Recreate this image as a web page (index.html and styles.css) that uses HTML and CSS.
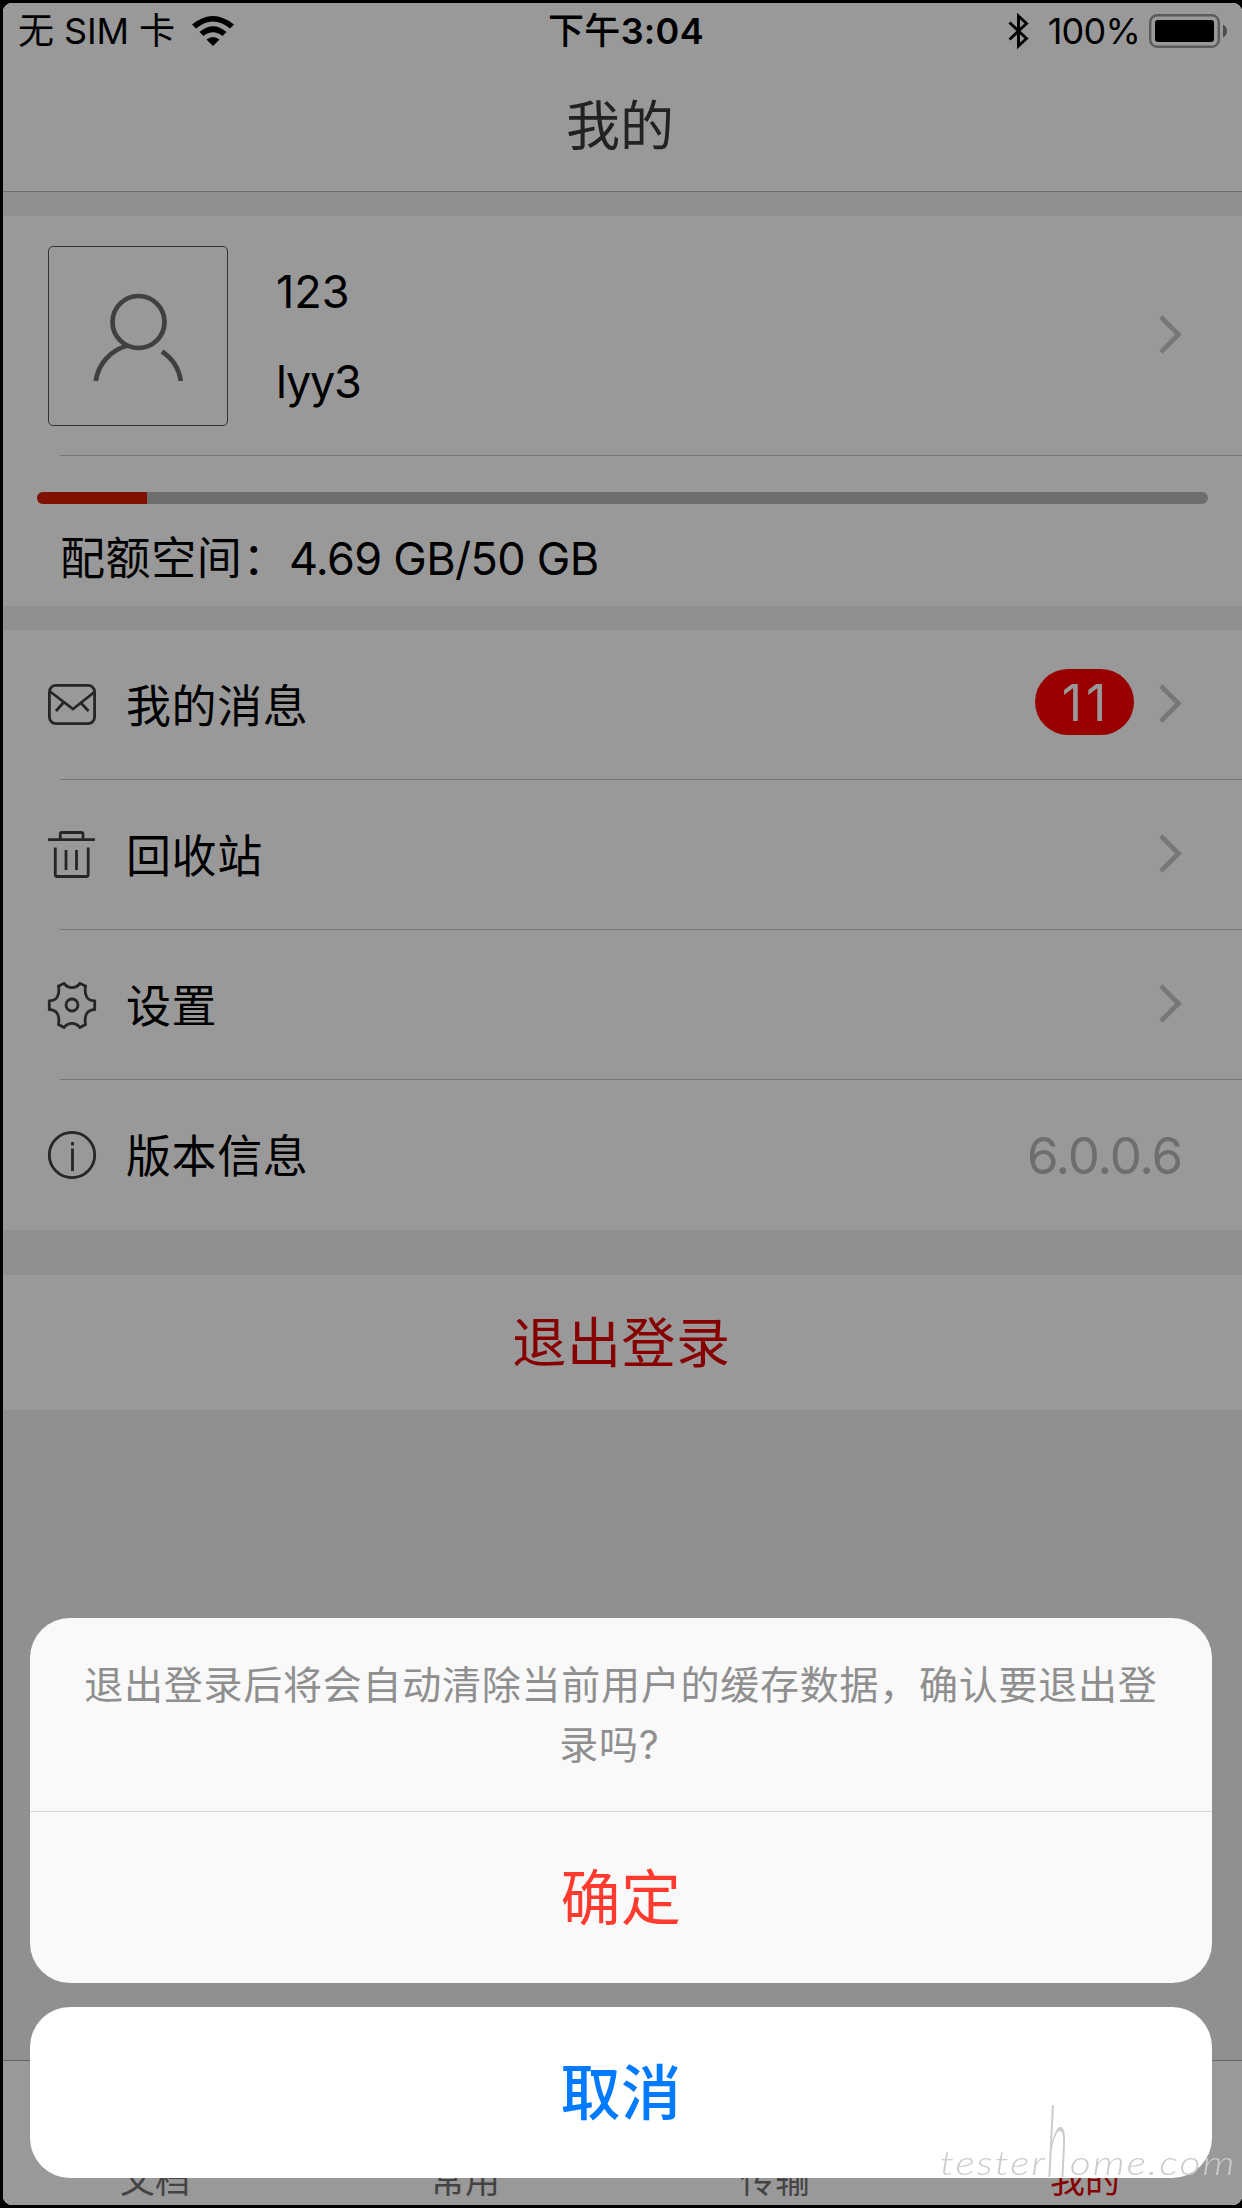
FILE: index.html
```html
<!DOCTYPE html>
<html lang="zh-CN">
<head>
<meta charset="utf-8">
<title>我的</title>
<link rel="stylesheet" href="styles.css">
</head>
<body>
<div class="phone">
  <header class="top">
    <div class="status">
      <div class="status-left">
        <span class="carrier">无 SIM 卡</span>
        <svg class="wifi" width="42" height="31" viewBox="0 0 42 31"><path d="M0 8.600Q21-8.600 42 8.600L38 12.600Q21-1.500 4 12.600ZM7.500 16Q21 4.500 34.500 16L30.500 20Q21 12.500 11.500 20ZM14.500 23.500Q21 18.500 27.500 23.500L21 30Z"/></svg>
      </div>
      <span class="time"><span class="period">下午</span>3:04</span>
      <div class="status-right">
        <svg class="bluetooth" width="21" height="38" viewBox="0 0 21 38"><path d="M1.500 10.500L18.500 26.500 10.500 34V4L18.500 11.500 1.500 27.500" fill="none" stroke="#000" stroke-width="2.900"/></svg>
        <span class="percent">100%</span>
        <svg class="battery" width="78" height="34" viewBox="0 0 78 34"><rect x="1.200" y="1.200" width="68.600" height="31.600" rx="7" fill="none" stroke="#989898" stroke-width="2.400"/><rect x="6" y="6" width="59" height="22" rx="3"/><path d="M74 10.500Q78 12.500 78 17T74 23.500Z" fill="#808080"/></svg>
      </div>
    </div>
    <h1 class="title">我的</h1>
  </header>

  <section class="group profile-group">
    <div class="profile">
      <div class="avatar">
        <svg width="178" height="178" viewBox="49 247 178 178" fill="none" stroke="#6b6b6b" stroke-width="4.700"><circle cx="138.500" cy="322" r="26"/><path d="M95.700 381A43 43 0 0 1 128 345.500M162 351.500A43 43 0 0 1 180.800 381"/></svg>
      </div>
      <div class="names"><span>123</span><span class="account">lyy3</span></div>
      <svg class="chevron" width="23" height="39" viewBox="0 0 23 39"><path d="M1.800 1.800L19.500 19.500 1.800 37.200"/></svg>
    </div>
    <div class="quota">
      <div class="bar"><div class="used" style="width:110px"></div></div>
      <div class="quota-text"><span>配额空间：</span><span class="amount">4.69 GB/50 GB</span></div>
    </div>
  </section>

  <section class="group menu">
    <div class="row">
      <svg class="icon" width="50" height="50" viewBox="47 680 50 50"><rect x="49.400" y="685.400" width="45.200" height="38.200" rx="6.500"/><path d="M50 691.500L73 709 94.500 692M63.500 702.500L56 711M80.500 702.500L88.500 711"/></svg>
      <span class="label">我的消息</span>
      <span class="badge">11</span>
      <svg class="chevron" width="23" height="39" viewBox="0 0 23 39"><path d="M1.800 1.800L19.500 19.500 1.800 37.200"/></svg>
    </div>
    <div class="row">
      <svg class="icon" width="50" height="50" viewBox="47 830 50 50"><path d="M48 839.700H95M60.300 839V834Q60.300 832.500 62 832.500H81.500Q83 832.500 83 834V839M55.300 847.500V874.500Q55.300 876.500 57 876.500H86.500Q88.200 876.500 88.200 874.500V847.500M66 850V870M76.500 850V870"/></svg>
      <span class="label">回收站</span>
      <svg class="chevron" width="23" height="39" viewBox="0 0 23 39"><path d="M1.800 1.800L19.500 19.500 1.800 37.200"/></svg>
    </div>
    <div class="row">
      <svg class="icon" width="50" height="50" viewBox="47 979 50 50"><path d="M49.300 1000V1008.500C57 1009 60 1014 58.500 1023.500L64 1026.500C68.500 1021 75.500 1021 80 1026.500L85.500 1023.500C84 1014 87 1009 94.700 1008.500V1000C87 999.500 84 994.500 85.500 985L80 982.500C75.500 988 68.500 988 64 982.500L58.500 985C60 994.500 57 999.500 49.300 1000Z"/><circle cx="72" cy="1004" r="6"/></svg>
      <span class="label">设置</span>
      <svg class="chevron" width="23" height="39" viewBox="0 0 23 39"><path d="M1.800 1.800L19.500 19.500 1.800 37.200"/></svg>
    </div>
    <div class="row">
      <svg class="icon" width="50" height="50" viewBox="47 1130 50 50"><circle cx="72" cy="1155" r="22.700"/><path d="M72.500 1142V1145.500M72.500 1148.500V1171"/></svg>
      <span class="label">版本信息</span>
      <span class="version">6.0.0.6</span>
    </div>
  </section>

  <div class="group logout">退出登录</div>

  <nav class="tabs"><span>文档</span><span>常用</span><span>传输</span><span class="active">我的</span></nav>

  <div class="overlay">
    <div class="card sheet">
      <p class="message">退出登录后将会自动清除当前用户的缓存数据，确认要退出登录吗?&nbsp;&nbsp;</p>
      <div class="confirm">确定</div>
    </div>
    <div class="card cancel">取消</div>
  </div>
</div>
<div class="watermark">tester<span class="tall">h</span>ome.com</div>
</body>
</html>
```
FILE: styles.css
```css
* { box-sizing: border-box; }
body {
  margin: 0;
  width: 1242px;
  height: 2208px;
  padding: 3px 0 3px 3px;
  background: #000;
  overflow: hidden;
  position: relative;
  font-family: Inter, "Noto Sans CJK SC", sans-serif;
  color: #000;
}
svg { display: block; flex: none; }
.phone {
  position: relative;
  height: 2202px;
  display: flex;
  flex-direction: column;
  background: #f0f0f0;
  border-radius: 9px;
  overflow: hidden;
}
.top { height: 189px; background: #fff; border-bottom: 1px solid #b2b2b2; }
.status {
  height: 56px;
  display: grid;
  grid-template-columns: 1fr auto 1fr;
  align-items: center;
  padding: 0 15px;
  font-size: 36px;
  line-height: 56px;
}
.status-left, .status-right { display: flex; align-items: center; }
.status-left { gap: 17px; }
.status-right { justify-content: flex-end; }
.carrier { letter-spacing: -0.1px; }
.time { font-weight: 600; padding-left: 7px; letter-spacing: 0.3px; }
.period { font-weight: 500; }
.percent { margin: 0 9px 0 19px; letter-spacing: -0.8px; }
.title {
  margin: 28px 0 0;
  padding-right: 5px;
  text-align: center;
  font-size: 54px;
  line-height: 80px;
  font-weight: 400;
  color: #3a3a3a;
}
.group { background: #fff; }
.profile-group { margin-top: 24px; height: 390px; }
.profile { height: 240px; display: flex; align-items: center; padding: 0 60px 0 45px; position: relative; }
.profile::after, .row:not(:last-child)::after {
  content: "";
  position: absolute;
  left: 57px;
  right: 0;
  bottom: 0;
  height: 1px;
  background: #c8c8c8;
}
.avatar { width: 180px; height: 180px; border: 1px solid #555; border-radius: 5px; }
.names { flex: 1; margin-left: 48px; padding-top: 2px; display: flex; flex-direction: column; font-size: 45px; line-height: 90px; }
.account { letter-spacing: -1.2px; }
.chevron { fill: none; stroke: #c7c7cc; stroke-width: 4.700px; margin-bottom: 3px; }
.quota { padding: 36px 34px 0; }
.bar { height: 12px; border-radius: 6px; background: #b7b7b7; overflow: hidden; }
.used { height: 12px; background: #d61c00; }
.quota-text { margin: 20px 0 0 23px; display: flex; font-size: 45px; line-height: 70px; letter-spacing: 0.6px; }
.amount { margin-left: 1px; letter-spacing: -0.7px; }
.menu { margin-top: 24px; }
.row { position: relative; height: 150px; display: flex; align-items: center; padding: 0 60px 0 44px; }
.icon { fill: none; stroke: #404040; stroke-width: 2.800px; }
.label { flex: 1; margin: 0 0 4px 29px; font-size: 45px; letter-spacing: 0.6px; }
.badge {
  width: 99px;
  height: 66px;
  margin: -6px 25px 0 0;
  padding-left: 3px;
  border-radius: 33px;
  background: #f00;
  color: #fff;
  font-size: 50px;
  line-height: 69px;
  letter-spacing: 4px;
  text-align: center;
}
.version { color: #b7b7bb; font-size: 51px; letter-spacing: -1.2px; }
.logout {
  margin-top: 45px;
  height: 135px;
  padding-right: 2px;
  text-align: center;
  font-size: 54px;
  line-height: 137px;
  letter-spacing: 0.6px;
  color: #e10000;
}
.tabs {
  margin-top: auto;
  height: 145px;
  display: grid;
  grid-template-columns: repeat(4, 310px);
  align-items: end;
  margin-left: -3px;
  background: #fff;
  border-top: 1px solid #a8a8a8;
  text-align: center;
  font-size: 35px;
  line-height: 49px;
  color: #717171;
}
.tabs .active { color: #e10000; }
.overlay {
  position: absolute;
  inset: 0;
  display: flex;
  flex-direction: column;
  justify-content: flex-end;
  gap: 24px;
  padding: 0 30px 27px 27px;
  background: rgba(0, 0, 0, 0.4);
}
.card { border-radius: 40px; text-align: center; }
.sheet { height: 365px; background: #f9f9f9; }
.message {
  margin: 0;
  height: 194px;
  padding: 37px 50px 0;
  border-bottom: 1px solid #d8d8d9;
  font-size: 39px;
  line-height: 60px;
  letter-spacing: 0.75px;
  color: #8f8f8f;
}
.confirm, .cancel { height: 171px; font-size: 60px; line-height: 173px; letter-spacing: 0.6px; }
.confirm { color: #ff3b30; }
.cancel { background: #fff; color: #007aff; font-weight: 500; }
.watermark {
  position: absolute;
  left: 940px;
  top: 2137px;
  font: italic 300 33px/50px Lato, sans-serif;
  letter-spacing: 1.6px;
  white-space: nowrap;
  color: #ccc;
  transform: scaleX(1.24);
  transform-origin: 0 0;
}
.tall { display: inline-block; transform: scaleY(3); transform-origin: 50% 37px; }
```
